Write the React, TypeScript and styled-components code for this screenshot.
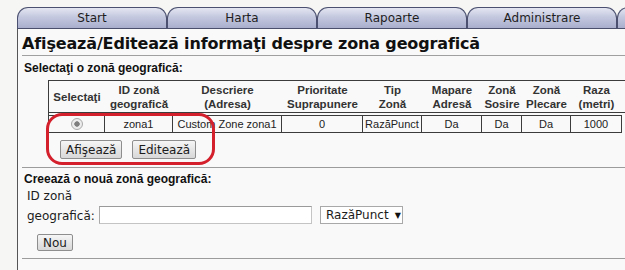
import React from "react";
import styled, { createGlobalStyle } from "styled-components";

const GlobalStyle = createGlobalStyle`
  html, body { margin: 0; padding: 0; }
  body {
    width: 625px;
    height: 270px;
    overflow: hidden;
    background: #f6f6f4;
    font-family: "Liberation Sans", Arial, sans-serif;
  }
`;

const Page = styled.div`
  position: relative;
  display: flex;
  flex-direction: column;
  width: 625px;
  height: 270px;
  padding: 7px 0 0 17px;
  box-sizing: border-box;
  overflow: hidden;
`;

const TabBar = styled.nav`
  display: flex;
  flex-shrink: 0;
  height: 21px;
  border-bottom: 1px solid #4a4f6c;
`;

const Tab = styled.div`
  flex: 0 0 150px;
  box-sizing: border-box;
  display: flex;
  align-items: center;
  justify-content: center;
  border: 1px solid #4b5070;
  border-bottom: none;
  border-radius: 11px 11px 0 0;
  background: linear-gradient(to bottom, #e4e6f1 0%, #c4c8df 45%, #a9aecc 100%);
  font-family: "DejaVu Sans", Verdana, sans-serif;
  font-size: 12px;
  color: #1e1e1e;
`;

const Panel = styled.main`
  flex: 1;
  display: flex;
  flex-direction: column;
  border-left: 1px solid #555;
  background: #f9f9f9;
  padding-left: 4px;
  min-width: 0;
`;

const Title = styled.h1`
  margin: 0;
  padding: 5px 0 1px 0;
  line-height: 20px;
  font-family: "DejaVu Sans", Verdana, sans-serif;
  font-size: 16px;
  letter-spacing: -0.15px;
  font-weight: bold;
  color: #111;
  border-bottom: 1px solid #a0a0a0;
  white-space: nowrap;
`;

const SectionLabel = styled.div<{ $top: number }>`
  margin: ${(p) => p.$top}px 0 0 2px;
  line-height: 14px;
  font-size: 12px;
  font-weight: bold;
  color: #111;
`;

const TableWrap = styled.div`
  margin: 5px 0 0 26px;
`;

const Grid = styled.table`
  table-layout: fixed;
  width: 640px;
  border-collapse: separate;
  border-spacing: 0 2px;
  border-top: 1px solid #3c3c3c;
  border-left: 1px solid #3c3c3c;
  font-size: 11px;
`;

const Th = styled.th<{ $w?: number }>`
  box-sizing: border-box;
  width: ${(p) => (p.$w ? `${p.$w}px` : "auto")};
  padding: 0 0 1px 0;
  line-height: 14px;
  font-size: 11.5px;
  font-weight: bold;
  color: #333;
  text-align: center;
  vertical-align: middle;
  border-bottom: 1px solid #3c3c3c;
`;

const Td = styled.td<{ $blank?: boolean }>`
  box-sizing: border-box;
  padding: 0;
  height: 18px;
  line-height: 15px;
  color: #222;
  text-align: center;
  white-space: nowrap;
  overflow: hidden;
  border-top: ${(p) => (p.$blank ? "none" : "1px solid #3c3c3c")};
  border-bottom: ${(p) => (p.$blank ? "none" : "1px solid #3c3c3c")};
  border-right: ${(p) => (p.$blank ? "none" : "1px solid #3c3c3c")};
`;

const Radio = styled.input`
  appearance: none;
  -webkit-appearance: none;
  width: 12px;
  height: 12px;
  margin: 0;
  vertical-align: -2px;
  border: 1px solid #aaaaaa;
  border-radius: 50%;
  box-sizing: border-box;
  background: radial-gradient(circle, #7e7e7e 0 2.4px, #ececec 3px);
`;

const ButtonRow = styled.div<{ $left: number; $top: number }>`
  display: flex;
  gap: 10px;
  margin: ${(p) => p.$top}px 0 0 ${(p) => p.$left}px;
`;

const Button = styled.button<{ $h?: number }>`
  box-sizing: border-box;
  height: ${(p) => p.$h ?? 19}px;
  padding: 0 5px;
  border: 1px solid #8e8e8e;
  border-radius: 2px;
  background: linear-gradient(to bottom, #f6f6f6 0%, #e6e6e6 50%, #d8d8d8 100%);
  font-family: "DejaVu Sans", Verdana, sans-serif;
  font-size: 12px;
  color: #1c1c1c;
  line-height: 1;
`;

const Rule = styled.hr<{ $top: number }>`
  margin: ${(p) => p.$top}px 0 0 0;
  border: none;
  border-top: 1px solid #9c9c9c;
  height: 0;
`;

const FormRow = styled.div`
  display: flex;
  align-items: flex-end;
  margin-left: 5px;
`;

const FieldLabel = styled.label`
  width: 70px;
  line-height: 20px;
  font-family: "DejaVu Sans", Verdana, sans-serif;
  font-size: 12px;
  color: #1c1c1c;
`;

const TextInput = styled.input`
  box-sizing: border-box;
  width: 213px;
  height: 18px;
  margin: 0 0 2px 2px;
  border: 1px solid #c4c4c4;
  border-top-color: #9a9a9a;
  border-left-color: #aaaaaa;
  background: #fff;
`;

const SelectBox = styled.div`
  box-sizing: border-box;
  display: flex;
  align-items: center;
  gap: 6px;
  width: 83px;
  height: 18px;
  margin: 0 0 2px 8px;
  padding: 0 0 0 5px;
  border: 1px solid #a9a9a9;
  background: #fff;
  font-family: "DejaVu Sans", Verdana, sans-serif;
  font-size: 12px;
  color: #1c1c1c;
`;

const Caret = styled.span`
  font-size: 8px;
  color: #111;
`;

const Highlight = styled.div`
  position: absolute;
  left: 46px;
  top: 113px;
  width: 169px;
  height: 52px;
  box-sizing: border-box;
  border: 3px solid #d3202c;
  border-radius: 16px;
  pointer-events: none;
`;

type Col = { lines: string[]; w: number; value: React.ReactNode };

const columns: Col[] = [
  { lines: ["Selectaţi"], w: 56, value: <Radio type="radio" checked readOnly /> },
  { lines: ["ID zonă", "geografică"], w: 68, value: "zona1" },
  { lines: ["Descriere", "(Adresa)"], w: 109, value: "Custom Zone zona1" },
  { lines: ["Prioritate", "Suprapunere"], w: 81, value: "0" },
  { lines: ["Tip", "Zonă"], w: 59, value: "RazăPunct" },
  { lines: ["Mapare", "Adresă"], w: 60, value: "Da" },
  { lines: ["Zonă", "Sosire"], w: 40, value: "Da" },
  { lines: ["Zonă", "Plecare"], w: 49, value: "Da" },
  { lines: ["Raza", "(metri)"], w: 51, value: "1000" },
];

const tabs = ["Start", "Harta", "Rapoarte", "Administrare", ""];

export default function App() {
  return (
    <>
      <GlobalStyle />
      <Page>
        <TabBar>
          {tabs.map((t, i) => (
            <Tab key={i}>{t}</Tab>
          ))}
        </TabBar>
        <Panel>
          <Title>Afişează/Editează informaţi despre zona geografică</Title>
          <SectionLabel $top={5}>Selectaţi o zonă geografică:</SectionLabel>
          <TableWrap>
            <Grid>
              <thead>
                <tr>
                  {columns.map((c, i) => (
                    <Th key={i} $w={c.w}>
                      {c.lines.map((l, j) => (
                        <React.Fragment key={j}>
                          {j > 0 && <br />}
                          {l}
                        </React.Fragment>
                      ))}
                    </Th>
                  ))}
                  <Th />
                </tr>
              </thead>
              <tbody>
                <tr>
                  {columns.map((c, i) => (
                    <Td key={i}>{c.value}</Td>
                  ))}
                  <Td $blank />
                </tr>
              </tbody>
            </Grid>
          </TableWrap>
          <ButtonRow $left={38} $top={5}>
            <Button>Afişează</Button>
            <Button>Editează</Button>
          </ButtonRow>
          <Rule $top={8} />
          <SectionLabel $top={4}>Creează o nouă zonă geografică:</SectionLabel>
          <FormRow>
            <FieldLabel htmlFor="zone-id">ID zonă geografică:</FieldLabel>
            <TextInput id="zone-id" type="text" />
            <SelectBox>
              RazăPunct <Caret>▼</Caret>
            </SelectBox>
          </FormRow>
          <ButtonRow $left={15} $top={8}>
            <Button $h={17}>Nou</Button>
          </ButtonRow>
          <Rule $top={7} />
        </Panel>
        <Highlight />
      </Page>
    </>
  );
}
